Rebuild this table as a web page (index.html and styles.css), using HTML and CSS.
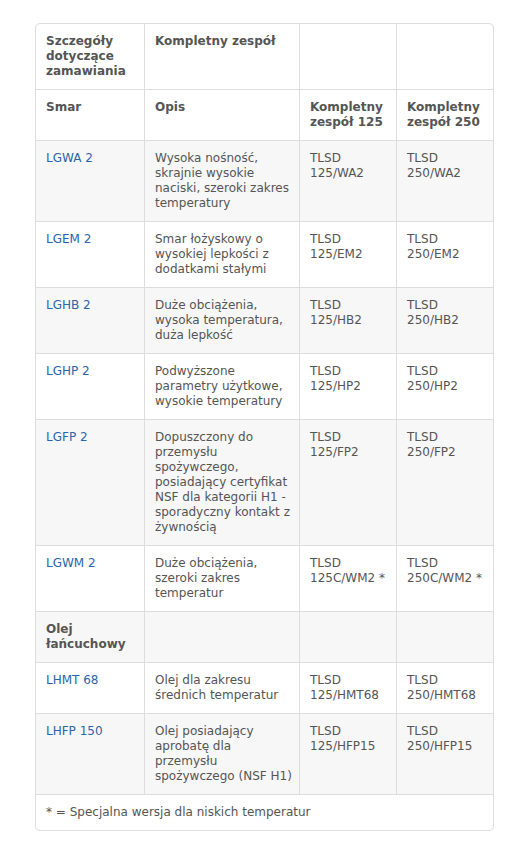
FILE: index.html
```html
<!DOCTYPE html>
<html lang="pl">
<head>
<meta charset="utf-8">
<link rel="stylesheet" href="styles.css">
</head>
<body>
<div class="card">
<table class="spec">
<colgroup><col class="c1"><col class="c2"><col class="c3"><col class="c4"></colgroup>
<tbody>
<tr class="head"><th>Szczegóły dotyczące zamawiania</th><th>Kompletny zespół</th><th></th><th></th></tr>
<tr class="head"><th>Smar</th><th>Opis</th><th>Kompletny zespół 125</th><th>Kompletny zespół 250</th></tr>
<tr class="odd"><td><a href="#">LGWA 2</a></td><td>Wysoka nośność, skrajnie wysokie naciski, szeroki zakres temperatury</td><td>TLSD 125/WA2</td><td>TLSD 250/WA2</td></tr>
<tr><td><a href="#">LGEM 2</a></td><td>Smar łożyskowy o wysokiej lepkości z dodatkami stałymi</td><td>TLSD 125/EM2</td><td>TLSD 250/EM2</td></tr>
<tr class="odd"><td><a href="#">LGHB 2</a></td><td>Duże obciążenia, wysoka temperatura, duża lepkość</td><td>TLSD 125/HB2</td><td>TLSD 250/HB2</td></tr>
<tr><td><a href="#">LGHP 2</a></td><td>Podwyższone parametry użytkowe, wysokie temperatury</td><td>TLSD 125/HP2</td><td>TLSD 250/HP2</td></tr>
<tr class="odd"><td><a href="#">LGFP 2</a></td><td>Dopuszczony do przemysłu spożywczego, posiadający certyfikat NSF dla kategorii H1 - sporadyczny kontakt z żywnością</td><td>TLSD 125/FP2</td><td>TLSD 250/FP2</td></tr>
<tr><td><a href="#">LGWM 2</a></td><td>Duże obciążenia, szeroki zakres temperatur</td><td>TLSD 125C/WM2 *</td><td>TLSD 250C/WM2 *</td></tr>
<tr class="odd"><th>Olej łańcuchowy</th><td></td><td></td><td></td></tr>
<tr><td><a href="#">LHMT 68</a></td><td>Olej dla zakresu średnich temperatur</td><td>TLSD 125/HMT68</td><td>TLSD 250/HMT68</td></tr>
<tr class="odd"><td><a href="#">LHFP 150</a></td><td>Olej posiadający aprobatę dla przemysłu spożywczego (NSF H1)</td><td>TLSD 125/HFP15</td><td>TLSD 250/HFP15</td></tr>
<tr class="foot"><td colspan="4">* = Specjalna wersja dla niskich temperatur</td></tr>
</tbody>
</table>
</div>
</body>
</html>
```

FILE: styles.css
```css
html, body {
  margin: 0;
  padding: 0;
  background: #ffffff;
}
body {
  font-family: "DejaVu Sans", Verdana, sans-serif;
  font-size: 12px;
  line-height: 15px;
  color: #555555;
}
.card {
  box-sizing: border-box;
  width: 459px;
  margin: 23px 0 0 35px;
  border: 1px solid #dddddd;
  border-radius: 5px;
  overflow: hidden;
}
.spec {
  width: 457px;
  table-layout: fixed;
  border-collapse: separate;
  border-spacing: 0;
}
.c1 { width: 109px; }
.c2 { width: 155px; }
.c3 { width: 97px; }
.c4 { width: 96px; }
.spec th, .spec td {
  box-sizing: border-box;
  padding: 10px 9px 10px 10px;
  text-align: left;
  vertical-align: top;
  border-right: 1px solid #dddddd;
  border-bottom: 1px solid #dddddd;
}
.spec td:nth-child(2) { padding-right: 3px; }
.spec tr.foot td { padding-right: 9px; }
.spec th { font-weight: bold; }
.spec tr > :last-child { border-right: 0; }
.spec tr.odd th, .spec tr.odd td { background: #f7f7f7; }
.spec tr.foot td { border-bottom: 0; }
.spec a {
  color: #2a65ad;
  text-decoration: none;
}
```
